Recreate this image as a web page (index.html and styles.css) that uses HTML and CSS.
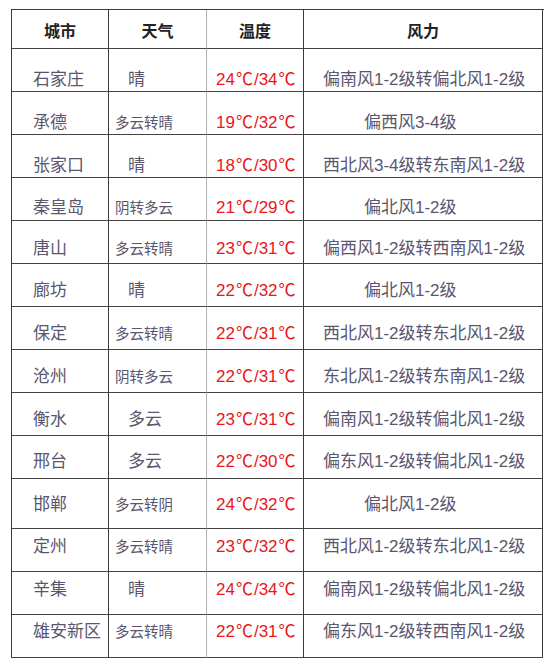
FILE: index.html
```html
<!DOCTYPE html>
<html lang="zh">
<head>
<meta charset="utf-8">
<link rel="stylesheet" href="styles.css">
</head>
<body>
<div class="table">
  <div class="row head">
    <div class="cell c1">城市</div><div class="cell c2">天气</div><div class="cell c3">温度</div><div class="cell c4">风力</div>
  </div>
  <div class="body">
    <div class="row"><div class="cell c1">石家庄</div><div class="cell c2 big">晴</div><div class="cell c3">24<span class="deg">℃</span>/34<span class="deg">℃</span></div><div class="cell c4">偏南风1-2级转偏北风1-2级</div></div>
    <div class="row"><div class="cell c1">承德</div><div class="cell c2">多云转晴</div><div class="cell c3">19<span class="deg">℃</span>/32<span class="deg">℃</span></div><div class="cell c4 short">偏西风3-4级</div></div>
    <div class="row"><div class="cell c1">张家口</div><div class="cell c2 big">晴</div><div class="cell c3">18<span class="deg">℃</span>/30<span class="deg">℃</span></div><div class="cell c4">西北风3-4级转东南风1-2级</div></div>
    <div class="row"><div class="cell c1">秦皇岛</div><div class="cell c2">阴转多云</div><div class="cell c3">21<span class="deg">℃</span>/29<span class="deg">℃</span></div><div class="cell c4 short">偏北风1-2级</div></div>
    <div class="row"><div class="cell c1">唐山</div><div class="cell c2">多云转晴</div><div class="cell c3">23<span class="deg">℃</span>/31<span class="deg">℃</span></div><div class="cell c4">偏西风1-2级转西南风1-2级</div></div>
    <div class="row"><div class="cell c1">廊坊</div><div class="cell c2 big">晴</div><div class="cell c3">22<span class="deg">℃</span>/32<span class="deg">℃</span></div><div class="cell c4 short">偏北风1-2级</div></div>
    <div class="row"><div class="cell c1">保定</div><div class="cell c2">多云转晴</div><div class="cell c3">22<span class="deg">℃</span>/31<span class="deg">℃</span></div><div class="cell c4">西北风1-2级转东北风1-2级</div></div>
    <div class="row"><div class="cell c1">沧州</div><div class="cell c2">阴转多云</div><div class="cell c3">22<span class="deg">℃</span>/31<span class="deg">℃</span></div><div class="cell c4">东北风1-2级转东南风1-2级</div></div>
    <div class="row"><div class="cell c1">衡水</div><div class="cell c2 big">多云</div><div class="cell c3">23<span class="deg">℃</span>/31<span class="deg">℃</span></div><div class="cell c4">偏南风1-2级转偏北风1-2级</div></div>
    <div class="row"><div class="cell c1">邢台</div><div class="cell c2 big">多云</div><div class="cell c3">22<span class="deg">℃</span>/30<span class="deg">℃</span></div><div class="cell c4">偏东风1-2级转偏北风1-2级</div></div>
    <div class="row tall"><div class="cell c1">邯郸</div><div class="cell c2">多云转阴</div><div class="cell c3">24<span class="deg">℃</span>/32<span class="deg">℃</span></div><div class="cell c4 short">偏北风1-2级</div></div>
    <div class="row"><div class="cell c1">定州</div><div class="cell c2">多云转晴</div><div class="cell c3">23<span class="deg">℃</span>/32<span class="deg">℃</span></div><div class="cell c4">西北风1-2级转东北风1-2级</div></div>
    <div class="row"><div class="cell c1">辛集</div><div class="cell c2 big">晴</div><div class="cell c3">24<span class="deg">℃</span>/34<span class="deg">℃</span></div><div class="cell c4">偏南风1-2级转偏北风1-2级</div></div>
    <div class="row"><div class="cell c1">雄安新区</div><div class="cell c2">多云转晴</div><div class="cell c3">22<span class="deg">℃</span>/31<span class="deg">℃</span></div><div class="cell c4">偏东风1-2级转西南风1-2级</div></div>
  </div>
</div>
</body>
</html>
```
FILE: styles.css
```css
html, body {
  margin: 0;
  padding: 0;
  background: #ffffff;
}
body {
  padding: 9px 0 0 11px;
  font-family: "Liberation Sans", "Noto Sans CJK SC", sans-serif;
  color: #5a566e;
}
.table {
  width: 532px;
  border-left: 1px solid #3a3a3a;
  border-top: 1px solid #3a3a3a;
}
.row {
  display: grid;
  grid-template-columns: 97px 98px 97px 239px;
  height: 43px;
}
.cell {
  box-sizing: border-box;
  display: flex;
  align-items: center;
  border-right: 1px solid #3a3a3a;
  border-bottom: 1px solid #444444;
  font-size: 17px;
  line-height: 20px;
  white-space: nowrap;
}
.c2 {
  border-right-color: #b4b4b4;
}
.head {
  height: 39px;
}
.head .cell {
  justify-content: center;
  font-family: "Noto Sans CJK SC", sans-serif;
  font-weight: 700;
  font-size: 16px;
  color: #222222;
  padding-top: 2px;
}
.body .c1 { padding-left: 21px; }
.body .c2 { padding-left: 6px; font-size: 14.5px; }
.body .c2.big { padding-left: 19px; font-size: 17px; }
.body .c3 { padding-left: 9px; color: #e8161b; }
.body .c4 { padding-left: 19px; }
.body .c4.short { padding-left: 60px; }
.deg {
  padding: 0 1px;
}
.row.tall { height: 50px; }

.body .row:nth-child(1) .cell,
.body .row:nth-child(2) .cell { padding-top: 20px; }
.body .row:nth-child(3) .cell { padding-top: 19px; }
.body .row:nth-child(4) .cell { padding-top: 17px; }
.body .row:nth-child(5) .cell { padding-top: 14px; }
.body .row:nth-child(6) .cell,
.body .row:nth-child(7) .cell,
.body .row:nth-child(8) .cell,
.body .row:nth-child(9) .cell { padding-top: 12px; }
.body .row:nth-child(10) .cell { padding-top: 9px; }
.body .row:nth-child(11) .cell { padding-top: 2px; }
.body .row:nth-child(12) .cell,
.body .row:nth-child(13) .cell { padding-bottom: 6px; }
.body .row:nth-child(14) .cell { padding-bottom: 8px; }
```
